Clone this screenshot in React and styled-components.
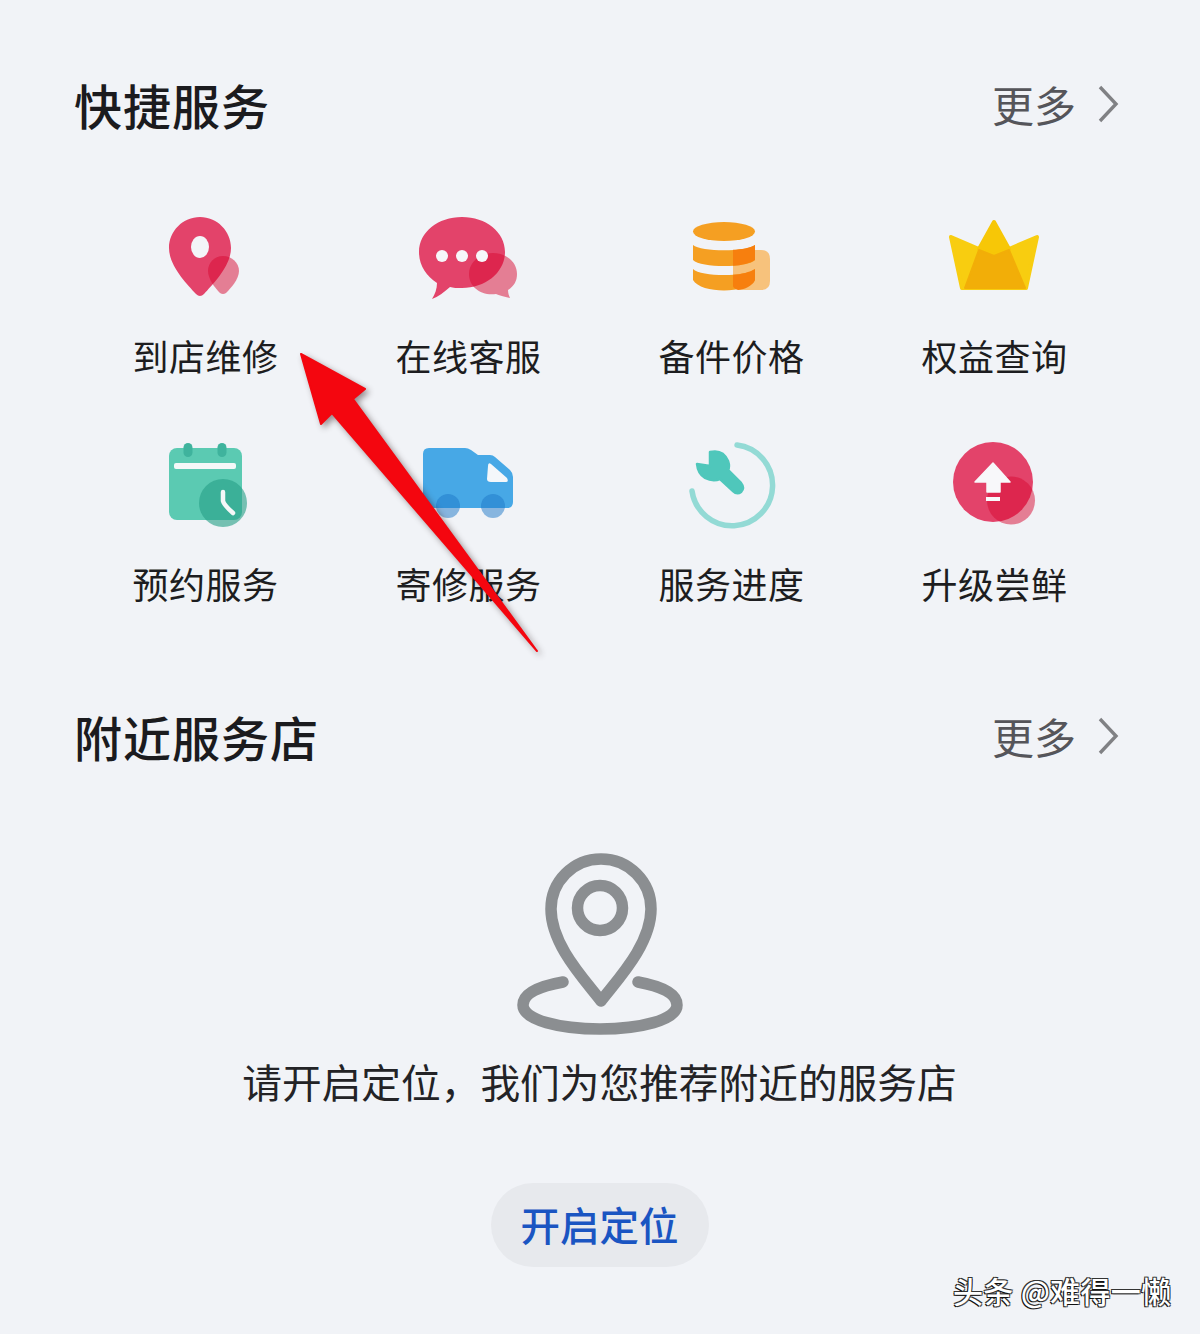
import React from "react";
import styled, { createGlobalStyle } from "styled-components";

const Global = createGlobalStyle`
  html, body { margin: 0; padding: 0; background: #f1f3f7; }
`;

const Page = styled.div`
  position: relative;
  width: 1200px;
  height: 1334px;
  box-sizing: border-box;
  padding: 77px 74px 0 73px;
  background: #f1f3f7;
  overflow: hidden;
  font-family: "Noto Sans CJK SC", "Noto Sans", sans-serif;
  color: #1d1d20;
`;

const SectionHeader = styled.div`
  display: flex;
  align-items: center;
  justify-content: space-between;
  height: 54px;
  padding: 0 6px 0 1px;
  margin-top: ${(p) => p.$top || 0}px;
`;

const Title = styled.h2`
  margin: 0;
  font-size: 48px;
  line-height: 54px;
  font-weight: 500;
  letter-spacing: 1px;
  color: #1b1b1e;
`;

const More = styled.div`
  display: flex;
  align-items: center;
  gap: 20px;
  font-size: 42px;
  line-height: 50px;
  color: #55555a;
  font-weight: 400;
`;

const Grid = styled.div`
  display: grid;
  grid-template-columns: repeat(4, 263px);
  row-gap: 58px;
  margin-top: 79px;
`;

const Service = styled.div`
  display: flex;
  flex-direction: column;
  align-items: center;
`;

const IconBox = styled.svg`
  display: block;
  width: 100px;
  height: 100px;
`;

const Label = styled.div`
  margin-top: ${(p) => p.$gap}px;
  padding-left: 2px;
  font-size: 36px;
  line-height: 48px;
  letter-spacing: 0.5px;
  color: #1d1d20;
  white-space: nowrap;
`;

const Empty = styled.div`
  display: flex;
  flex-direction: column;
  align-items: center;
  margin-top: 77px;
`;

const LocationArt = styled.svg`
  display: block;
  width: 220px;
  height: 210px;
`;

const Hint = styled.p`
  margin: 3px 0 0;
  font-size: 39.7px;
  line-height: 56px;
  color: #232326;
  white-space: nowrap;
`;

const EnableButton = styled.button`
  margin-top: 74px;
  width: 218px;
  height: 84px;
  border: none;
  border-radius: 42px;
  background: #e7e9ed;
  color: #1a55c2;
  font-family: inherit;
  font-size: 39.5px;
  font-weight: 500;
  padding: 0 0 4px;
`;

const ArrowOverlay = styled.svg`
  position: absolute;
  left: 280px;
  top: 335px;
  width: 280px;
  height: 330px;
  filter: drop-shadow(3px 3px 3px rgba(40, 20, 20, 0.45));
`;

const Watermark = styled.div`
  position: absolute;
  left: 953px;
  top: 1270px;
  font-size: 30px;
  line-height: 40px;
  font-weight: 500;
  color: #fff;
  white-space: nowrap;
  letter-spacing: 0.3px;
  text-shadow: -1px 1px 0 #111, 1px -1px 0 #333, -1px -1px 0 #333, 1px 1px 0 #555;
`;

const Chevron = () => (
  <svg width="24" height="40" viewBox="0 0 24 40" aria-hidden="true">
    <path d="M4 3 L20 20 L4 37" fill="none" stroke="#808184" strokeWidth="3.4" />
  </svg>
);

const ALPHA = "rgba(215,10,50,.5)";

const PinIcon = () => (
  <IconBox viewBox="0 0 100 100">
    <path d="M45 7 C62 7 76 21 76 38 C76 56 58 74 49 84 Q45 88 41 84 C32 74 14 56 14 38 C14 21 28 7 45 7 Z" fill="#e3436a" />
    <ellipse cx="45" cy="37" rx="9" ry="11" fill="#f3f5f8" />
    <path d="M68 46 C77 46 84 53 84 61 C84 69 76 78 71 83 Q68 85 65 83 C60 78 53 69 53 61 C53 53 59 46 68 46 Z" fill={ALPHA} />
  </IconBox>
);

const ChatIcon = () => (
  <IconBox viewBox="0 0 100 100">
    <path d="M44 7 C68 7 87 22 87 42 C87 62 68 78 44 78 C39 78 35 78 32 77 C26 82 20 87 14 89 C17 84 19 79 19 73 C8 66 1 55 1 42 C1 22 20 7 44 7 Z" fill="#e3436a" />
    <path d="M75 43 C88 43 99 52 99 64 C99 71 96 76 90 80 C90 83 91 86 92 88 C86 87 81 85 78 84 C63 86 51 77 51 64 C51 52 62 43 75 43 Z" fill={ALPHA} />
    <circle cx="24" cy="46" r="6" fill="#f6f7fa" />
    <circle cx="44" cy="46" r="6" fill="#f6f7fa" />
    <circle cx="64" cy="46" r="6" fill="#f6f7fa" />
  </IconBox>
);

const CoinsIcon = () => (
  <IconBox viewBox="0 0 100 100">
    <path d="M52 40 H80 Q89 40 89 49 V71 Q89 80 80 80 H62 Q52 80 52 70 Z" fill="#f7c27c" />
    <ellipse cx="43" cy="21.5" rx="31" ry="9.5" fill="#f59f22" />
    <path d="M12 35 C20 42 66 42 74 35 V50 C66 58 20 58 12 50 Z" fill="#f59f22" />
    <path d="M12 59 C20 67 66 67 74 59 V70 C66 84 20 84 12 70 Z" fill="#f59f22" />
    <path d="M52 39.8 C60 39.5 69 38 74 35 V50 C70 53 60 55.5 52 55.8 Z" fill="#f77f0e" />
    <path d="M52 64.8 C60 64.5 69 62 74 59 V70 C72 76 62 80 57 80 Q52 78 52 76 Z" fill="#f77f0e" />
  </IconBox>
);

const CrownIcon = () => (
  <IconBox viewBox="0 0 100 100">
    <path d="M7 27 L35 39 L50 45 L65 39 L93 27 L82 78 H18 Z" fill="#f8cd10" stroke="#f8cd10" strokeWidth="4" strokeLinejoin="round" />
    <path d="M50 12 L65 39 L50 45 L35 39 Z" fill="#f7c707" stroke="#f7c707" strokeWidth="4" strokeLinejoin="round" />
    <path d="M35 40 L50 46 L65 40 L81 78 H21 Z" fill="#f2ae08" stroke="#f2ae08" strokeWidth="2" strokeLinejoin="round" />
  </IconBox>
);

const CalendarIcon = () => (
  <IconBox viewBox="0 0 100 100">
    <rect x="14" y="11" width="73" height="72" rx="8" fill="#5bcab2" />
    <rect x="28.5" y="6" width="9" height="14" rx="4.5" fill="#3fb39d" />
    <rect x="62.5" y="6" width="9" height="14" rx="4.5" fill="#3fb39d" />
    <rect x="19" y="26" width="62" height="6" rx="2" fill="#f4f8f8" />
    <circle cx="68" cy="66" r="24" fill="rgba(40,160,135,.62)" />
    <path d="M68 55 L68 64 Q69 68 78 76" fill="none" stroke="#f4f8f8" strokeWidth="4.5" strokeLinecap="round" strokeLinejoin="round" />
  </IconBox>
);

const TruckIcon = () => (
  <IconBox viewBox="0 0 100 100">
    <path d="M11 11 H47 Q50 11 53 13 L60 18 H72 Q75 18 77 20 L92 33 Q95 36 95 40 V65 Q95 71 89 71 H11 Q5 71 5 65 V17 Q5 11 11 11 Z" fill="#47a8e6" />
    <path d="M70 29 Q70 25 73 27 L89 41 Q91 45 88 45 H73 Q69 45 69 42 Z" fill="#f4f7fa" />
    <circle cx="30" cy="69" r="12" fill="rgba(30,120,200,.5)" />
    <circle cx="75" cy="69" r="12" fill="rgba(30,120,200,.5)" />
  </IconBox>
);

const ProgressIcon = () => (
  <IconBox viewBox="0 0 100 100">
    <path d="M56 8 A40.5 40.5 0 1 1 11 54" fill="none" stroke="#93dad5" strokeWidth="5.5" strokeLinecap="round" />
    <path d="M29 15 Q42 12 47 24 Q49 30 47 33 L60 46 Q64 51 60 55 Q56 58 52 54 L39 42 Q32 45 24 41 Q17 37 16 27 L29 29 Z" fill="#4fc7bb" stroke="#4fc7bb" strokeWidth="2.5" strokeLinejoin="round" />
  </IconBox>
);

const UpgradeIcon = () => (
  <IconBox viewBox="0 0 100 100">
    <circle cx="49" cy="45" r="40" fill="#e3436a" />
    <circle cx="67" cy="63.5" r="24" fill={ALPHA} />
    <path d="M49 26 L66 45 H56 V55 H43 V45 H31 Z" fill="#f8f8fa" stroke="#f8f8fa" strokeWidth="1.5" strokeLinejoin="round" />
    <rect x="42" y="60" width="14" height="4" fill="#f8f8fa" />
  </IconBox>
);

const services = [
  { label: "到店维修", Icon: PinIcon, gap: 21 },
  { label: "在线客服", Icon: ChatIcon, gap: 21 },
  { label: "备件价格", Icon: CoinsIcon, gap: 21 },
  { label: "权益查询", Icon: CrownIcon, gap: 21 },
  { label: "预约服务", Icon: CalendarIcon, gap: 22 },
  { label: "寄修服务", Icon: TruckIcon, gap: 22 },
  { label: "服务进度", Icon: ProgressIcon, gap: 22 },
  { label: "升级尝鲜", Icon: UpgradeIcon, gap: 22 },
];

const Header = ({ title, top }) => (
  <SectionHeader $top={top}>
    <Title>{title}</Title>
    <More>
      更多
      <Chevron />
    </More>
  </SectionHeader>
);

export default function App() {
  return (
    <Page>
      <Global />
      <Header title="快捷服务" />
      <Grid>
        {services.map(({ label, Icon, gap }) => (
          <Service key={label}>
            <Icon />
            <Label $gap={gap}>{label}</Label>
          </Service>
        ))}
      </Grid>
      <Header title="附近服务店" top={102} />
      <Empty>
        <LocationArt viewBox="0 0 220 210">
          <g fill="none" stroke="#8b8e91" strokeWidth="11.5" strokeLinecap="round" strokeLinejoin="round">
            <path d="M111 161 C95 140 61 105 61 69 A50 50 0 0 1 161 69 C161 105 127 140 111 161 Z" />
            <circle cx="110" cy="68" r="22.5" />
            <path d="M73 142 C50 146 33 153 33 165 C33 180 70 189 110 189 C150 189 187 180 187 165 C187 153 170 146 148 142" />
          </g>
        </LocationArt>
        <Hint>请开启定位，我们为您推荐附近的服务店</Hint>
        <EnableButton>开启定位</EnableButton>
      </Empty>
      <ArrowOverlay viewBox="280 335 280 330">
        <path d="M301 354 L365 389 L353 399 L537 651 L332 413 L321 424 L301 354 Z" fill="#f4060f" stroke="#f4060f" strokeWidth="2" strokeLinejoin="round" />
      </ArrowOverlay>
      <Watermark>头条 @难得一懒</Watermark>
    </Page>
  );
}
